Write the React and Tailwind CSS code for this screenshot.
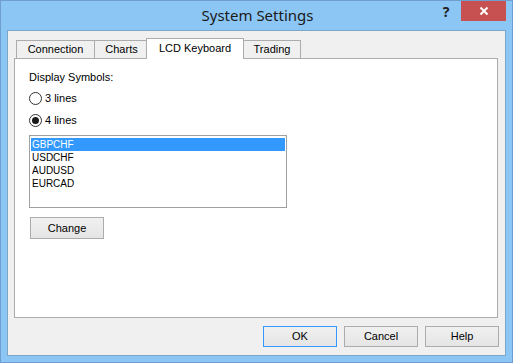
import React, { useState } from 'react'

// tab widths and left overlaps, measured from the dialog
const tabs = [
  { label: "Connection", w: "w-[79px]", ml: "" },
  { label: "Charts", w: "w-[55px]", ml: "-ml-px" },
  { label: "LCD Keyboard", w: "w-[98px]", ml: "-ml-[3px]" },
  { label: "Trading", w: "w-[58px]", ml: "-ml-px" },
]
const symbols = ["GBPCHF", "USDCHF", "AUDUSD", "EURCAD"]

function Radio({ checked, label, onClick, className = "" }) {
  return (
    <div className={`flex items-center h-4 gap-[3px] cursor-default ${className}`} onClick={onClick}>
      <div className="w-[13px] h-[13px] rounded-full border border-[#333333] bg-white flex items-center justify-center">
        {checked && <div className="w-[7px] h-[7px] rounded-full bg-[#1a1a1a]" />}
      </div>
      <span>{label}</span>
    </div>
  )
}

function Button({ children, primary, className = "" }) {
  return (
    <button
      className={`h-[21px] w-[74px] border bg-gradient-to-b from-[#f0f0f0] to-[#e5e5e5] text-[11px] text-black ${primary ? "border-[#3399ff]" : "border-[#acacac]"} ${className}`}
    >
      {children}
    </button>
  )
}

export default function App() {
  const [lines, setLines] = useState(4)
  const [active, setActive] = useState(2)
  const [selected, setSelected] = useState(0)

  return (
    <div className="w-[513px] h-[363px] bg-[#8cc6f5] border border-[#6e9fd0] flex flex-col font-['Liberation_Sans',Arial,sans-serif] text-[11px] text-black select-none">
      {/* title bar */}
      <div className="h-[29px] flex items-start relative">
        <div className="flex-1 h-full flex items-center justify-center text-[15px] text-[#1a1a1a] font-['Noto_Sans',sans-serif] pl-[2px]">
          System Settings
        </div>
        <div className="absolute right-[6px] top-0 flex items-start">
          <div className="w-[20px] h-[20px] flex items-center justify-center text-[14px] font-bold text-[#222] mr-[5px] font-['Noto_Sans',sans-serif]">?</div>
          <div className="w-[45px] h-[20px] bg-[#c75050] flex items-center justify-center">
            <svg width="10" height="10" viewBox="0 0 10 10">
              <path d="M1.5 1.5 L8.5 8.5 M8.5 1.5 L1.5 8.5" stroke="white" strokeWidth="2" />
            </svg>
          </div>
        </div>
      </div>

      {/* client area */}
      <div className="flex-1 mx-[6px] mb-[6px] bg-[#f0f0f0] border border-[#7ea6c8] flex flex-col pl-[6px] pr-[7px]">
        {/* tabs */}
        <div className="flex items-end h-[27px] pl-[2px] relative z-10">
          {tabs.map((t, i) => (
            <div
              key={t.label}
              onClick={() => setActive(i)}
              className={
                i === active
                  ? `h-[21px] -mb-px ${t.w} ${t.ml} bg-white border border-b-0 border-[#acacac] flex items-center justify-center relative z-10`
                  : `h-[18px] ${t.w} ${t.ml} bg-[#f0f0f0] border border-b-0 border-[#acacac] flex items-center justify-center`
              }
            >
              <span className={i === active ? "-mt-[2px]" : ""}>{t.label}</span>
            </div>
          ))}
        </div>

        {/* panel */}
        <div className="h-[260px] bg-white border border-[#acacac] flex flex-col items-start pl-[14px] pt-[10px]">
          <div className="h-4 flex items-center">Display Symbols:</div>
          <Radio className="mt-[5px]" checked={lines === 3} label="3 lines" onClick={() => setLines(3)} />
          <Radio className="mt-[6px]" checked={lines === 4} label="4 lines" onClick={() => setLines(4)} />

          <div className="mt-[7px] w-[258px] h-[73px] border border-[#a0a0a0] bg-white p-[1px] text-[10px]">
            {symbols.map((s, i) => (
              <div
                key={s}
                onClick={() => setSelected(i)}
                className={`h-[13px] px-[1px] flex items-center ${i === 0 ? "mt-px" : ""} ${i === selected ? "bg-[#3399ff] text-white" : "text-black"}`}
              >
                {s}
              </div>
            ))}
          </div>

          <Button className="mt-[9px] h-[22px] ml-px">Change</Button>
        </div>

        {/* buttons */}
        <div className="flex justify-end gap-[7px] mt-[8px] -mr-[1px]">
          <Button primary>OK</Button>
          <Button>Cancel</Button>
          <Button>Help</Button>
        </div>
      </div>
    </div>
  )
}
